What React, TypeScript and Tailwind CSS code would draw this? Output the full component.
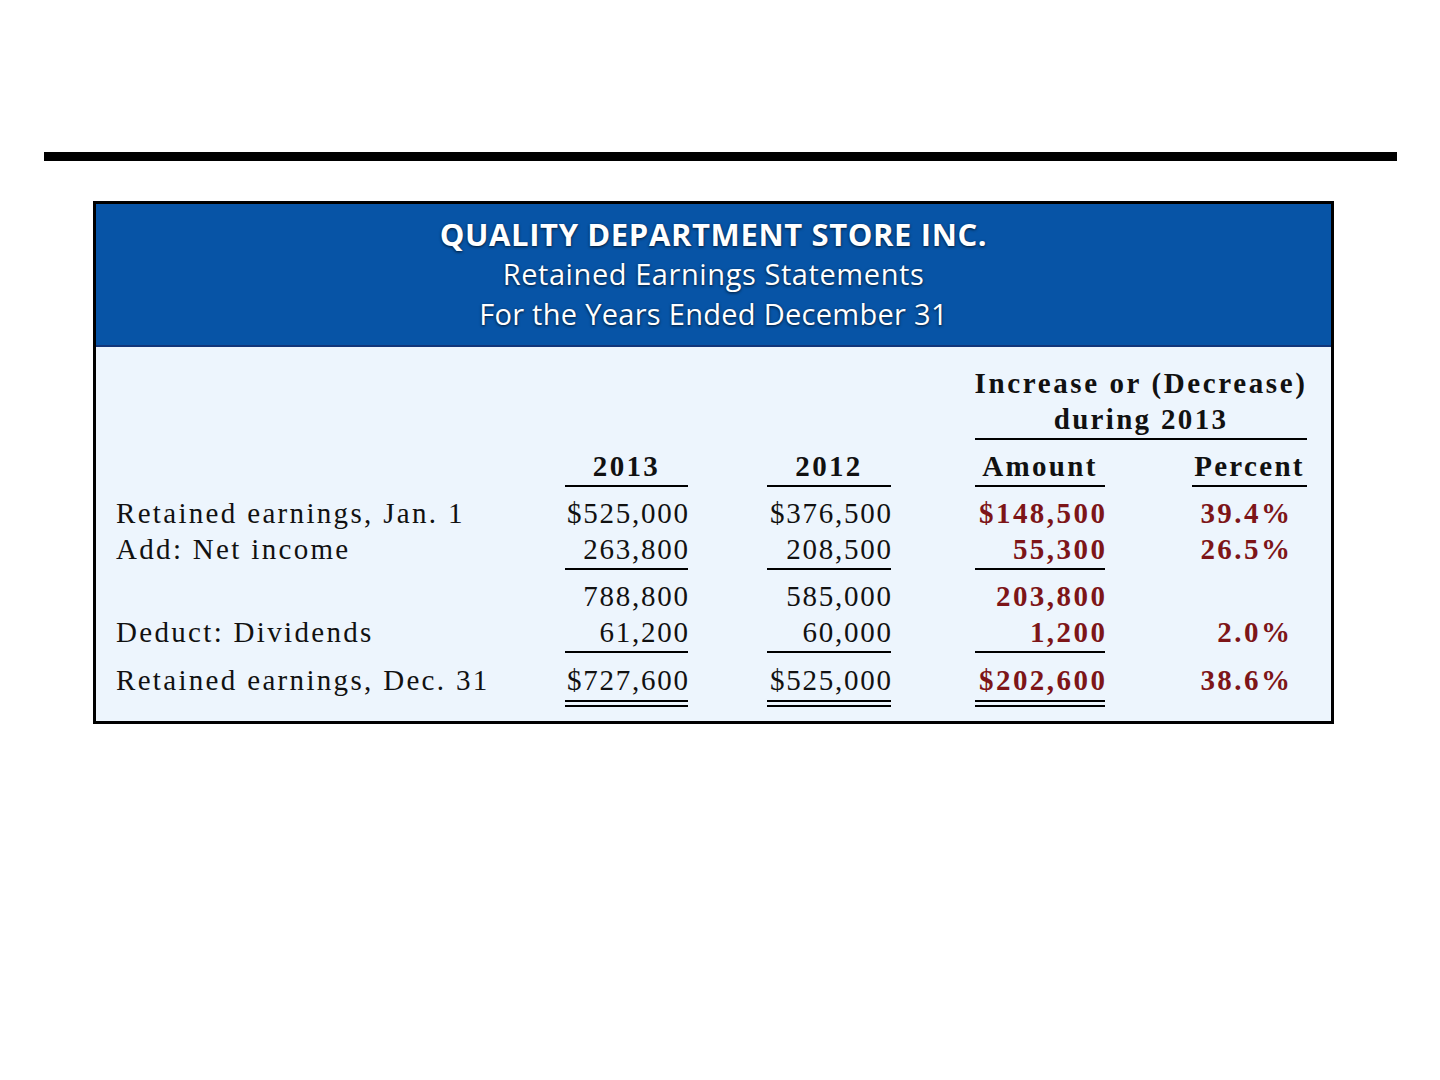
import React from "react"

type Rule = "none" | "single" | "double"

interface Cell {
  text?: string
  width: string
  align?: "left" | "right" | "center"
  tone?: "label" | "plain" | "bold" | "header"
  rule?: Rule
  extra?: string
}

const serif = "font-['Liberation_Serif','Times_New_Roman',serif]"

const TONE: Record<string, string> = {
  label: "text-[29px] tracking-[0.08em] text-[#111]",
  plain: "text-[29px] tracking-[0.06em] text-[#111]",
  bold: "text-[29px] font-bold tracking-[0.085em] text-[#7d1518]",
  header: "text-[29px] font-bold tracking-[0.08em] text-[#111]",
}

// pull right-aligned text over its trailing letter-spacing
const TRAIL: Record<string, string> = {
  label: "",
  plain: "-mr-[0.06em]",
  bold: "-mr-[0.085em]",
  header: "",
}

const RULE: Record<Rule, string> = {
  none: "",
  single: "border-b-2 border-black pb-px",
  double: "border-b-[7px] border-double border-black pb-[2px]",
}

function Row({ cells, className = "" }: { cells: Cell[]; className?: string }) {
  return (
    <div className={`flex items-start pl-[20px] ${className}`}>
      {cells.map((c, i) => {
        const tone = c.tone ?? "plain"
        return (
          <div
            key={i}
            className={`shrink-0 ${c.width} ${RULE[c.rule ?? "none"]} ${
              c.align === "right" ? "text-right" : c.align === "center" ? "text-center" : "text-left"
            } ${c.extra ?? ""}`}
          >
            <span
              className={`block h-[36px] leading-[36px] whitespace-nowrap ${TONE[tone]} ${
                c.align === "right" ? TRAIL[tone] : ""
              }`}
            >
              {c.text ?? ""}
            </span>
          </div>
        )
      })}
    </div>
  )
}

const W = {
  label: "w-[449px]",
  c2013: "w-[123px]",
  gap1: "w-[79px]",
  c2012: "w-[124px]",
  gap2: "w-[84px]",
  amt: "w-[130px]",
  gap3: "w-[87px]",
  pct: "w-[115px]",
}

function dataRow(
  label: string,
  a: string,
  b: string,
  amt: string,
  pct: string,
  rule: Rule = "none",
): Cell[] {
  return [
    { text: label, width: W.label, tone: "label" },
    { text: a, width: W.c2013, align: "right", rule },
    { width: W.gap1 },
    { text: b, width: W.c2012, align: "right", rule },
    { width: W.gap2 },
    { text: amt, width: W.amt, align: "right", tone: "bold", rule },
    { width: W.gap3 },
    { text: pct, width: W.pct, align: "right", tone: "bold", extra: "pr-[17px]" },
  ]
}

export default function App() {
  return (
    <div className="min-h-[1080px] w-[1440px] bg-white pt-[152px]">
      <div className="ml-[44px] h-[9px] w-[1353px] bg-black" />

      <div className={`ml-[93px] mt-[40px] w-[1241px] border-[3px] border-black ${serif}`}>
        {/* blue banner */}
        <div className="h-[143px] border-b-2 border-[#12367a] bg-[#0754a6] pt-[10px] text-center text-white font-['Open_Sans','Noto_Sans',sans-serif] [text-shadow:0_1px_3px_rgba(0,0,0,0.75)]">
          <p className="text-[31px] font-bold leading-[40px] tracking-[0.02em]">QUALITY DEPARTMENT STORE INC.</p>
          <p className="text-[29px] font-medium leading-[40px] tracking-[0.02em]">Retained Earnings Statements</p>
          <p className="text-[29px] font-medium leading-[40px] tracking-[0.01em]">For the Years Ended December 31</p>
        </div>

        {/* statement body */}
        <div className="h-[374px] bg-[#edf5fd] pt-[18px]">
          <div className="flex pl-[879px]">
            <div className="w-[332px] border-b-2 border-black pb-px text-center">
              <p className={`-mx-[8px] h-[36px] leading-[36px] whitespace-nowrap ${TONE.header} tracking-[0.09em]`}>
                Increase or (Decrease)
              </p>
              <p className={`h-[36px] leading-[36px] whitespace-nowrap ${TONE.header}`}>during 2013</p>
            </div>
          </div>

          <Row
            className="mt-[8px]"
            cells={[
              { width: W.label },
              { text: "2013", width: W.c2013, align: "center", tone: "header", rule: "single" },
              { width: W.gap1 },
              { text: "2012", width: W.c2012, align: "center", tone: "header", rule: "single" },
              { width: W.gap2 },
              { text: "Amount", width: W.amt, align: "center", tone: "header", rule: "single" },
              { width: W.gap3 },
              { text: "Percent", width: W.pct, align: "center", tone: "header", rule: "single" },
            ]}
          />

          <Row className="mt-[8px]" cells={dataRow("Retained earnings, Jan. 1", "$525,000", "$376,500", "$148,500", "39.4%")} />
          <Row cells={dataRow("Add: Net income", "263,800", "208,500", "55,300", "26.5%", "single")} />

          <Row className="mt-[8px]" cells={dataRow("", "788,800", "585,000", "203,800", "")} />
          <Row cells={dataRow("Deduct: Dividends", "61,200", "60,000", "1,200", "2.0%", "single")} />
          <div className="h-px" />

          <Row className="mt-[8px]" cells={dataRow("Retained earnings, Dec. 31", "$727,600", "$525,000", "$202,600", "38.6%", "double")} />
        </div>
      </div>
    </div>
  )
}
